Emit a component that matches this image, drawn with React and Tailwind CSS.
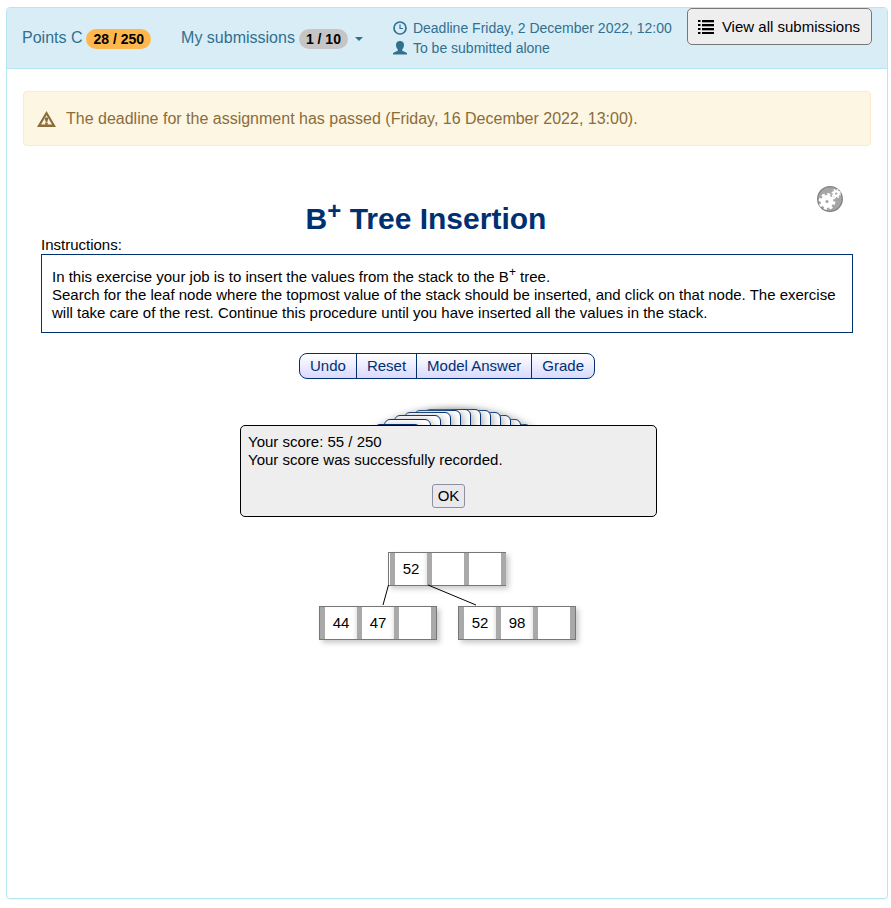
const font = 'font-["Liberation_Sans",Arial,sans-serif]';

function ClockIcon() {
  return (
    <svg className="size-3.5 shrink-0" viewBox="0 0 14 14" fill="none" stroke="currentColor" aria-hidden="true">
      <circle cx="7" cy="7" r="6" strokeWidth="1.7" />
      <path d="M7 3.4V7.5H10" strokeWidth="1.2" />
    </svg>
  );
}

function UserIcon() {
  return (
    <svg className="size-3.5 shrink-0" viewBox="0 0 14 14" fill="currentColor" aria-hidden="true">
      <path d="M7 0C9.5 0 11 1.4 11 3.8C11 5.8 10.3 7.4 9.2 8.4V9.3C9.2 9.7 9.4 9.9 9.8 10.1L13.2 11.5C13.8 11.8 14 12.1 14 12.7V13.5H0V12.7C0 12.1 .2 11.8 .8 11.5L4.2 10.1C4.6 9.9 4.8 9.7 4.8 9.3V8.4C3.7 7.4 3 5.8 3 3.8C3 1.4 4.5 0 7 0Z" />
    </svg>
  );
}

function WarningIcon() {
  return (
    <svg className="h-4 w-[19px] shrink-0" viewBox="0 0 19 16" aria-hidden="true">
      <path fill="currentColor" fillRule="evenodd" d="M9.5 0L19 16H0ZM9.5 4.2L4 13.6H15Z" />
      <path fill="currentColor" d="M7.9 6.6H11.1V8.6L10.2 10.9H8.8L7.9 8.6ZM8.2 11.6H10.8V13.8H8.2Z" />
    </svg>
  );
}

function ListIcon() {
  return (
    <svg className="h-3.5 w-4 shrink-0" viewBox="0 0 16 14" fill="currentColor" aria-hidden="true">
      <path d="M0 0H2.5V2H0ZM4 0H16V2H4ZM0 4H2.5V6H0ZM4 4H16V6H4ZM0 8H2.5V10H0ZM4 8H16V10H4ZM0 12H2.5V14H0ZM4 12H16V14H4Z" />
      <path d="M4 2H16V2.6H4ZM4 6H16V6.6H4ZM4 10H16V10.6H4Z" opacity="0.6" />
    </svg>
  );
}

function GearsIcon() {
  return (
    <svg className="size-[26px]" viewBox="0 0 26 26" aria-hidden="true">
      <circle cx="13" cy="13" r="12.3" fill="#a6a6a6" stroke="#808080" strokeWidth="1.3" />
      <g stroke="#fff" fill="none">
        <circle cx="10" cy="15.5" r="4" strokeWidth="4.8" />
        <circle cx="10" cy="15.5" r="6.9" strokeWidth="3" strokeDasharray="3 2.42" />
        <circle cx="19.2" cy="7.6" r="2.3" strokeWidth="2.2" />
        <circle cx="19.2" cy="7.6" r="3.8" strokeWidth="1.8" strokeDasharray="1.7 1.28" />
      </g>
    </svg>
  );
}

// Cards of the value stack, fanned out along an arc; the leftmost lies on top.
const cards = [
  [134, 45], [144, 40], [154, 36], [164, 33], [174, 31], [184, 30],
  [194, 30], [204, 31], [214, 33], [224, 36], [234, 40], [244, 45],
];

const nodes = [
  { id: "root", left: 148, top: 173, values: ["52", "", ""], frame: "border-y border-l pl-px" },
  { id: "leaf-1", left: 79, top: 227, values: ["44", "47", ""], frame: "border" },
  { id: "leaf-2", left: 218, top: 227, values: ["52", "98", ""], frame: "border" },
];

function TreeNode({ node }) {
  return (
    <div
      className={`absolute flex h-[34px] w-[118px] border-[#777] bg-white shadow-[3px_3px_5px_#ccc] ${node.frame}`}
      style={{ left: node.left, top: node.top }}
    >
      <span className="w-[5px] bg-[#a9a9a9]" />
      {node.values.map((v, i) => (
        <div key={i} className="flex">
          <span
            className={`flex w-8 items-center justify-center ${v ? "shadow-[inset_-4px_0_4px_-3px_#ddd]" : ""}`}
          >
            {v}
          </span>
          <span className="w-[5px] bg-[#a9a9a9]" />
        </div>
      ))}
    </div>
  );
}

function Badge({ className, children }) {
  return (
    <span className={`mt-0.5 ml-1 rounded-full px-[7px] text-sm leading-5 font-bold text-black ${className}`}>
      {children}
    </span>
  );
}

export default function App() {
  return (
    <div className={`${font} bg-white pt-[7px] pr-[3px] pb-[9px] pl-1.5 text-[15px] leading-[18px] text-black`}>
      <div className="min-h-[calc(100vh-16px)] rounded border border-[#b6e7f0] shadow-[0_1px_1px_rgba(0,0,0,0.05)]">
        <header className="flex items-start rounded-t border-b border-[#b6e7f0] bg-[#d9edf7] px-[15px] text-[#31708f]">
          <div className="flex h-[60px] items-center text-base whitespace-nowrap">
            Points C <Badge className="bg-[#ffb74d]">28 / 250</Badge>
          </div>
          <button type="button" className="ml-[30px] flex h-[60px] items-center text-base whitespace-nowrap">
            My submissions <Badge className="bg-[#c5c5c5]">1 / 10</Badge>
            <span className="mt-0.5 ml-[7px] border-x-4 border-t-4 border-x-transparent border-t-current" />
          </button>
          <div className="ml-[30px] py-2.5 text-sm leading-5 whitespace-nowrap">
            <div className="flex items-center gap-1.5"><ClockIcon />Deadline Friday, 2 December 2022, 12:00</div>
            <div className="flex items-center gap-1.5"><UserIcon />To be submitted alone</div>
          </div>
          <button
            type="button"
            className="ml-auto flex h-[37px] items-center gap-2 rounded-[5px] border border-[#777] bg-[#eee] pr-[11px] pl-2.5 whitespace-nowrap text-black"
          >
            <ListIcon />View all submissions
          </button>
        </header>

        <div className="mx-4 mt-[22px] flex h-[55px] items-center gap-2.5 rounded border border-[#faebcc] bg-[#fdf6e3] px-[13px] text-base text-[#8a6d3b]" role="alert">
          <WarningIcon />
          <p>The deadline for the assignment has passed (Friday, 16 December 2022, 13:00).</p>
        </div>

        <main className="mx-[34px] mt-10">
          <div className="flex items-start">
            <h1 className="mt-4 ml-1 grow text-center text-[30px] leading-[34px] font-bold text-[#003070]">
              B<sup className="-top-2.5 text-[24px] leading-none">+</sup> Tree Insertion
            </h1>
            <button type="button" aria-label="Settings" className="mr-2.5 ml-2.5"><GearsIcon /></button>
          </div>
          <p>Instructions:</p>
          <div className="border border-[#003070] px-2.5 pt-[13px] pb-2.5">
            In this exercise your job is to insert the values from the stack to the B<sup className="text-xs">+</sup> tree.
            <br />
            Search for the leaf node where the topmost value of the stack should be inserted, and click on that node. The exercise will take care of the rest. Continue this procedure until you have inserted all the values in the stack.
          </div>

          <div className="mt-5 flex justify-center">
            <div className="flex h-[26px] divide-x divide-[#003070] overflow-hidden rounded-lg border border-[#003070] bg-linear-to-b from-white to-[#d9d9ff] text-[#003070]">
              <button type="button" className="px-2.5">Undo</button>
              <button type="button" className="px-2.5">Reset</button>
              <button type="button" className="px-2.5">Model Answer</button>
              <button type="button" className="px-2.5">Grade</button>
            </div>
          </div>

          <div className="relative mx-auto h-[300px] w-[414px]">
            {cards.map(([left, top], i) => (
              <div
                key={left}
                className="absolute h-10 w-[47px] rounded-md border border-[#003070] bg-white shadow-[2px_2px_8px_#aaa]"
                style={{ left, top, zIndex: cards.length - i }}
              />
            ))}

            {nodes.map((n) => <TreeNode key={n.id} node={n} />)}
            <svg className="absolute top-0 left-0 h-[300px] w-[414px]" viewBox="0 0 414 300" stroke="#000" aria-hidden="true">
              <path d="M148.5 206L143 226M188 206L236 226" fill="none" />
            </svg>

            <div role="dialog" aria-label="Score" className="absolute top-[46px] left-0 z-20 h-[92px] w-[417px] rounded-[5px] border border-black bg-[#eee] px-[7px] py-[7px]">
              <p>Your score: 55 / 250</p>
              <p>Your score was successfully recorded.</p>
              <div className="mt-[15px] flex justify-center">
                <button type="button" className="h-6 rounded-[3px] border border-[#8f8f9d] bg-[#e9e9ed] px-[5px]">OK</button>
              </div>
            </div>
          </div>
        </main>
      </div>
    </div>
  );
}
